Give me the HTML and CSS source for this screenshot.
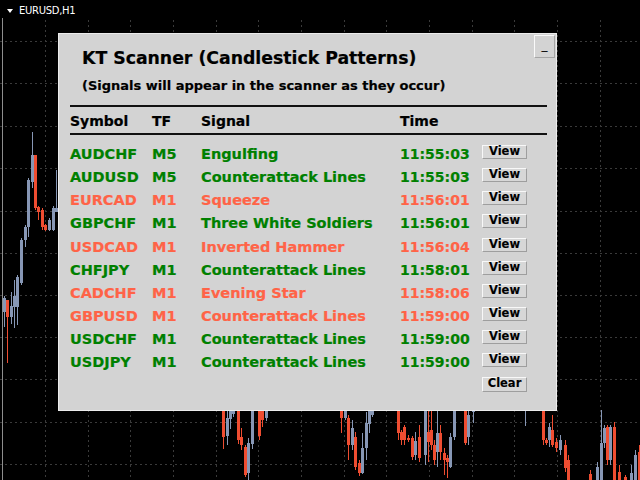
FILE: index.html
```html
<!DOCTYPE html>
<html lang="en">
<head>
  <meta charset="UTF-8" />
  <meta name="viewport" content="width=device-width, initial-scale=1" />
  <title>EURUSD,H1 - KT Scanner</title>
  <link rel="stylesheet" href="styles.css">
</head>
<body>

  <div class="chart">
    <!-- chart background: grid + candles -->
    <svg class="chart-bg" width="640" height="480" viewBox="0 0 640 480">
      <rect class="border-line" x="2" y="18" width="1" height="462"/>
      <g class="grid">
        <line x1="0" y1="41.5" x2="640" y2="41.5"/>
        <line x1="0" y1="83.5" x2="640" y2="83.5"/>
        <line x1="0" y1="126.5" x2="640" y2="126.5"/>
        <line x1="0" y1="168.5" x2="640" y2="168.5"/>
        <line x1="0" y1="211.5" x2="640" y2="211.5"/>
        <line x1="0" y1="253.5" x2="640" y2="253.5"/>
        <line x1="0" y1="295.5" x2="640" y2="295.5"/>
        <line x1="0" y1="337.5" x2="640" y2="337.5"/>
        <line x1="0" y1="379.5" x2="640" y2="379.5"/>
        <line x1="0" y1="422.5" x2="640" y2="422.5"/>
        <line x1="0" y1="464.5" x2="640" y2="464.5"/>
        <line x1="45.5" y1="20" x2="45.5" y2="480"/>
        <line x1="88.5" y1="20" x2="88.5" y2="480"/>
        <line x1="130.5" y1="20" x2="130.5" y2="480"/>
        <line x1="173.5" y1="20" x2="173.5" y2="480"/>
        <line x1="216.5" y1="20" x2="216.5" y2="480"/>
        <line x1="258.5" y1="20" x2="258.5" y2="480"/>
        <line x1="301.5" y1="20" x2="301.5" y2="480"/>
        <line x1="344.5" y1="20" x2="344.5" y2="480"/>
        <line x1="386.5" y1="20" x2="386.5" y2="480"/>
        <line x1="429.5" y1="20" x2="429.5" y2="480"/>
        <line x1="472.5" y1="20" x2="472.5" y2="480"/>
        <line x1="514.5" y1="20" x2="514.5" y2="480"/>
        <line x1="557.5" y1="20" x2="557.5" y2="480"/>
        <line x1="600.5" y1="20" x2="600.5" y2="480"/>
      </g>
      <!-- bullish candles -->
      <g class="up">
        <rect x="4" y="296" width="1" height="31"/><rect x="3" y="298" width="3" height="14"/>
        <rect x="11" y="292" width="1" height="32"/><rect x="10" y="306" width="3" height="11"/>
        <rect x="14" y="280" width="1" height="48"/><rect x="13" y="296" width="3" height="11"/>
        <rect x="17" y="275" width="1" height="50"/><rect x="16" y="277" width="3" height="30"/>
        <rect x="21" y="238" width="1" height="47"/><rect x="20" y="240" width="3" height="43"/>
        <rect x="25" y="225" width="1" height="22"/><rect x="24" y="227" width="3" height="13"/>
        <rect x="28" y="178" width="1" height="59"/><rect x="27" y="180" width="3" height="47"/>
        <rect x="32" y="132" width="1" height="56"/><rect x="31" y="155" width="3" height="27"/>
        <rect x="49" y="218" width="1" height="13"/><rect x="48" y="220" width="3" height="10"/>
        <rect x="53" y="206" width="1" height="25"/><rect x="52" y="208" width="3" height="22"/>
        <rect x="56" y="170" width="1" height="42"/><rect x="55" y="208" width="3" height="4"/>
        <rect x="227" y="400" width="1" height="45"/><rect x="226" y="418" width="3" height="18"/>
        <rect x="230" y="400" width="1" height="29"/><rect x="229" y="400" width="3" height="19"/>
        <rect x="233" y="400" width="1" height="17"/><rect x="232" y="400" width="3" height="14"/>
        <rect x="248" y="438" width="1" height="42"/><rect x="247" y="443" width="3" height="30"/>
        <rect x="252" y="400" width="1" height="49"/><rect x="251" y="400" width="3" height="44"/>
        <rect x="266" y="400" width="1" height="21"/><rect x="265" y="400" width="3" height="18"/>
        <rect x="345" y="400" width="1" height="20"/><rect x="344" y="400" width="3" height="18"/>
        <rect x="352" y="420" width="1" height="30"/><rect x="351" y="428" width="3" height="17"/>
        <rect x="362" y="433" width="1" height="41"/><rect x="361" y="448" width="3" height="25"/>
        <rect x="366" y="412" width="1" height="48"/><rect x="365" y="423" width="3" height="25"/>
        <rect x="369" y="400" width="1" height="33"/><rect x="368" y="400" width="3" height="24"/>
        <rect x="372" y="400" width="1" height="17"/><rect x="371" y="400" width="3" height="15"/>
        <rect x="415" y="432" width="1" height="28"/><rect x="414" y="441" width="3" height="14"/>
        <rect x="425" y="400" width="1" height="65"/><rect x="424" y="400" width="3" height="55"/>
        <rect x="437" y="411" width="1" height="56"/><rect x="436" y="433" width="3" height="19"/>
        <rect x="450" y="433" width="1" height="35"/><rect x="449" y="437" width="3" height="30"/>
        <rect x="454" y="400" width="1" height="40"/><rect x="453" y="400" width="3" height="37"/>
        <rect x="468" y="400" width="1" height="45"/><rect x="467" y="415" width="3" height="22"/>
        <rect x="473" y="400" width="1" height="23"/><rect x="472" y="400" width="3" height="12"/>
        <rect x="525" y="400" width="1" height="26"/>
        <rect x="549" y="423" width="1" height="24"/><rect x="548" y="427" width="3" height="13"/>
        <rect x="560" y="435" width="1" height="20"/><rect x="559" y="440" width="3" height="10"/>
        <rect x="597" y="462" width="1" height="18"/><rect x="596" y="467" width="3" height="13"/>
        <rect x="601" y="410" width="1" height="70"/><rect x="600" y="443" width="3" height="37"/>
        <rect x="604" y="425" width="1" height="23"/><rect x="603" y="428" width="3" height="15"/>
        <rect x="610" y="425" width="1" height="40"/><rect x="609" y="427" width="3" height="33"/>
        <rect x="631" y="465" width="1" height="15"/><rect x="630" y="473" width="3" height="7"/>
        <rect x="635" y="450" width="1" height="30"/><rect x="634" y="455" width="3" height="25"/>
      </g>
      <!-- bearish candles -->
      <g class="dn">
        <rect x="7" y="300" width="1" height="63"/><rect x="6" y="300" width="3" height="17"/>
        <rect x="35" y="155" width="1" height="55"/><rect x="34" y="155" width="3" height="53"/>
        <rect x="38" y="206" width="1" height="14"/><rect x="37" y="207" width="3" height="5"/>
        <rect x="42" y="208" width="1" height="22"/><rect x="41" y="210" width="3" height="17"/>
        <rect x="45" y="224" width="1" height="7"/><rect x="44" y="225" width="3" height="5"/>
        <rect x="223" y="400" width="1" height="49"/><rect x="222" y="400" width="3" height="37"/>
        <rect x="238" y="400" width="1" height="44"/><rect x="237" y="400" width="3" height="40"/>
        <rect x="241" y="428" width="1" height="22"/><rect x="240" y="437" width="3" height="8"/>
        <rect x="245" y="445" width="1" height="32"/><rect x="244" y="447" width="3" height="28"/>
        <rect x="259" y="400" width="1" height="40"/><rect x="258" y="400" width="3" height="36"/>
        <rect x="262" y="400" width="1" height="27"/><rect x="261" y="400" width="3" height="20"/>
        <rect x="341" y="400" width="1" height="33"/><rect x="340" y="400" width="3" height="18"/>
        <rect x="348" y="415" width="1" height="45"/><rect x="347" y="418" width="3" height="27"/>
        <rect x="355" y="432" width="1" height="38"/><rect x="354" y="437" width="3" height="30"/>
        <rect x="359" y="460" width="1" height="16"/><rect x="358" y="463" width="3" height="10"/>
        <rect x="398" y="400" width="1" height="40"/><rect x="397" y="400" width="3" height="33"/>
        <rect x="401" y="430" width="1" height="15"/><rect x="400" y="432" width="3" height="8"/>
        <rect x="404" y="425" width="1" height="20"/><rect x="403" y="427" width="3" height="13"/>
        <rect x="408" y="435" width="1" height="7"/><rect x="407" y="438" width="3" height="2"/>
        <rect x="412" y="436" width="1" height="24"/><rect x="411" y="438" width="3" height="19"/>
        <rect x="419" y="425" width="1" height="37"/><rect x="418" y="437" width="3" height="21"/>
        <rect x="428" y="405" width="1" height="57"/><rect x="427" y="432" width="3" height="10"/>
        <rect x="431" y="410" width="1" height="40"/><rect x="430" y="430" width="3" height="15"/>
        <rect x="434" y="440" width="1" height="25"/><rect x="433" y="445" width="3" height="15"/>
        <rect x="440" y="425" width="1" height="35"/><rect x="439" y="433" width="3" height="19"/>
        <rect x="444" y="448" width="1" height="27"/><rect x="443" y="453" width="3" height="7"/>
        <rect x="447" y="455" width="1" height="23"/><rect x="446" y="458" width="3" height="4"/>
        <rect x="465" y="400" width="1" height="45"/><rect x="464" y="400" width="3" height="43"/>
        <rect x="543" y="400" width="1" height="45"/><rect x="542" y="400" width="3" height="40"/>
        <rect x="546" y="438" width="1" height="7"/><rect x="545" y="440" width="3" height="3"/>
        <rect x="552" y="415" width="1" height="32"/><rect x="551" y="430" width="3" height="15"/>
        <rect x="556" y="438" width="1" height="14"/><rect x="555" y="442" width="3" height="6"/>
        <rect x="565" y="440" width="1" height="32"/><rect x="564" y="445" width="3" height="23"/>
        <rect x="568" y="455" width="1" height="25"/><rect x="567" y="460" width="3" height="20"/>
        <rect x="590" y="470" width="1" height="10"/><rect x="589" y="474" width="3" height="6"/>
        <rect x="607" y="425" width="1" height="40"/><rect x="606" y="427" width="3" height="33"/>
        <rect x="614" y="422" width="1" height="58"/><rect x="613" y="427" width="3" height="53"/>
        <rect x="619" y="465" width="1" height="15"/><rect x="618" y="472" width="3" height="8"/>
        <rect x="625" y="475" width="1" height="5"/><rect x="624" y="477" width="3" height="3"/>
        <rect x="639" y="445" width="1" height="35"/><rect x="638" y="452" width="3" height="28"/>
      </g>
    </svg>

    <div class="symbol-label">
      <svg class="arrow" width="6" height="4" viewBox="0 0 6 4"><path d="M0 0H6L3 4Z"/></svg>
      <span>EURUSD,H1</span>
    </div>

    <div class="scanner">
      <button class="minimize">_</button>
      <h1 class="title">KT Scanner (Candlestick Patterns)</h1>
      <p class="subtitle">(Signals will appear in the scanner as they occur)</p>

      <div class="scan-table">
        <div class="scan-head">
          <span>Symbol</span>
          <span>TF</span>
          <span>Signal</span>
          <span>Time</span>
        </div>
        <div class="scan-body">
          <div class="scan-row buy"><span>AUDCHF</span><span>M5</span><span>Engulfing</span><span class="time">11:55:03</span><button class="btn">View</button></div>
          <div class="scan-row buy"><span>AUDUSD</span><span>M5</span><span>Counterattack Lines</span><span class="time">11:55:03</span><button class="btn">View</button></div>
          <div class="scan-row sell"><span>EURCAD</span><span>M1</span><span>Squeeze</span><span class="time">11:56:01</span><button class="btn">View</button></div>
          <div class="scan-row buy"><span>GBPCHF</span><span>M1</span><span>Three White Soldiers</span><span class="time">11:56:01</span><button class="btn">View</button></div>
          <div class="scan-row sell"><span>USDCAD</span><span>M1</span><span>Inverted Hammer</span><span class="time">11:56:04</span><button class="btn">View</button></div>
          <div class="scan-row buy"><span>CHFJPY</span><span>M1</span><span>Counterattack Lines</span><span class="time">11:58:01</span><button class="btn">View</button></div>
          <div class="scan-row sell"><span>CADCHF</span><span>M1</span><span>Evening Star</span><span class="time">11:58:06</span><button class="btn">View</button></div>
          <div class="scan-row sell"><span>GBPUSD</span><span>M1</span><span>Counterattack Lines</span><span class="time">11:59:00</span><button class="btn">View</button></div>
          <div class="scan-row buy"><span>USDCHF</span><span>M1</span><span>Counterattack Lines</span><span class="time">11:59:00</span><button class="btn">View</button></div>
          <div class="scan-row buy"><span>USDJPY</span><span>M1</span><span>Counterattack Lines</span><span class="time">11:59:00</span><button class="btn">View</button></div>
          <div class="scan-actions"><button class="btn btn-clear">Clear</button></div>
        </div>
      </div>
    </div>
  </div>

</body>
</html>
```

FILE: styles.css
```css
body {
  margin: 0;
  background: #000;
  font-family: "DejaVu Sans", Verdana, sans-serif;
}
.chart {
  position: relative;
  width: 640px;
  height: 480px;
  overflow: hidden;
}
.chart-bg {
  position: absolute;
  left: 0;
  top: 0;
}
.border-line {
  fill: #8e8e8e;
}
.grid line {
  stroke: #3a3a3a;
  stroke-width: 1;
  stroke-dasharray: 2 3;
}
.up {
  fill: #8797b5;
}
.dn {
  fill: #ef4d31;
}
.symbol-label {
  position: absolute;
  left: 7px;
  top: 5px;
  display: flex;
  align-items: center;
  gap: 6px;
  color: #fff;
  font-size: 10px;
  line-height: 12px;
  letter-spacing: -0.3px;
}
.symbol-label .arrow {
  fill: #fff;
}

/* scanner panel */
.scanner {
  position: absolute;
  left: 58px;
  top: 33px;
  width: 499px;
  height: 378px;
  box-sizing: border-box;
  background: #d3d3d3;
  border: 1px solid #ececec;
  padding: 14px 9px 0 11px;
  color: #000;
}
.minimize {
  position: absolute;
  top: 1px;
  right: 1px;
  width: 21px;
  height: 23px;
  box-sizing: border-box;
  padding: 0 0 4px;
  background: #d3d3d3;
  border: 1px solid;
  border-color: #fafafa #a5a5a5 #a5a5a5 #fafafa;
  font-family: "DejaVu Sans", sans-serif;
  font-size: 12px;
  line-height: 14px;
  color: #000;
}
.title {
  margin: 0 0 0 12px;
  font-size: 17.3px;
  line-height: 20px;
  font-weight: bold;
  -webkit-text-stroke: 0.2px currentColor;
}
.subtitle {
  margin: 10px 0 0 12px;
  font-size: 13px;
  line-height: 16px;
  font-weight: bold;
  -webkit-text-stroke: 0.2px currentColor;
}
.scan-table {
  margin-top: 11px;
  font-size: 14px;
  font-weight: bold;
  -webkit-text-stroke: 0.2px currentColor;
}
.scan-head,
.scan-row {
  display: grid;
  grid-template-columns: 82px 49px 199px 82px 45px;
}
.scan-head {
  border-top: 2px solid #111;
  border-bottom: 2px solid #111;
  padding-top: 2px;
  line-height: 24px;
}
.scan-body {
  padding-top: 8px;
}
.scan-row {
  height: 23.15px;
  font-size: 14.5px;
  line-height: 23.15px;
  white-space: nowrap;
}
.scan-row .time {
  font-size: 14px;
}
.buy {
  color: #008000;
}
.sell {
  color: #ff6347;
}
.btn {
  align-self: start;
  margin-top: 2px;
  width: 45px;
  height: 14px;
  box-sizing: border-box;
  padding: 0 0 2px;
  background: #d7d7d7;
  border: 1px solid;
  border-color: #f8f8f8 #9e9e9e #9e9e9e #f8f8f8;
  font-family: "DejaVu Sans", sans-serif;
  font-size: 11.5px;
  font-weight: bold;
  line-height: 11px;
  color: #000;
  -webkit-text-stroke: 0.1px currentColor;
}
.scan-actions {
  padding-left: 412px;
}
.btn-clear {
  height: 15px;
}
```
